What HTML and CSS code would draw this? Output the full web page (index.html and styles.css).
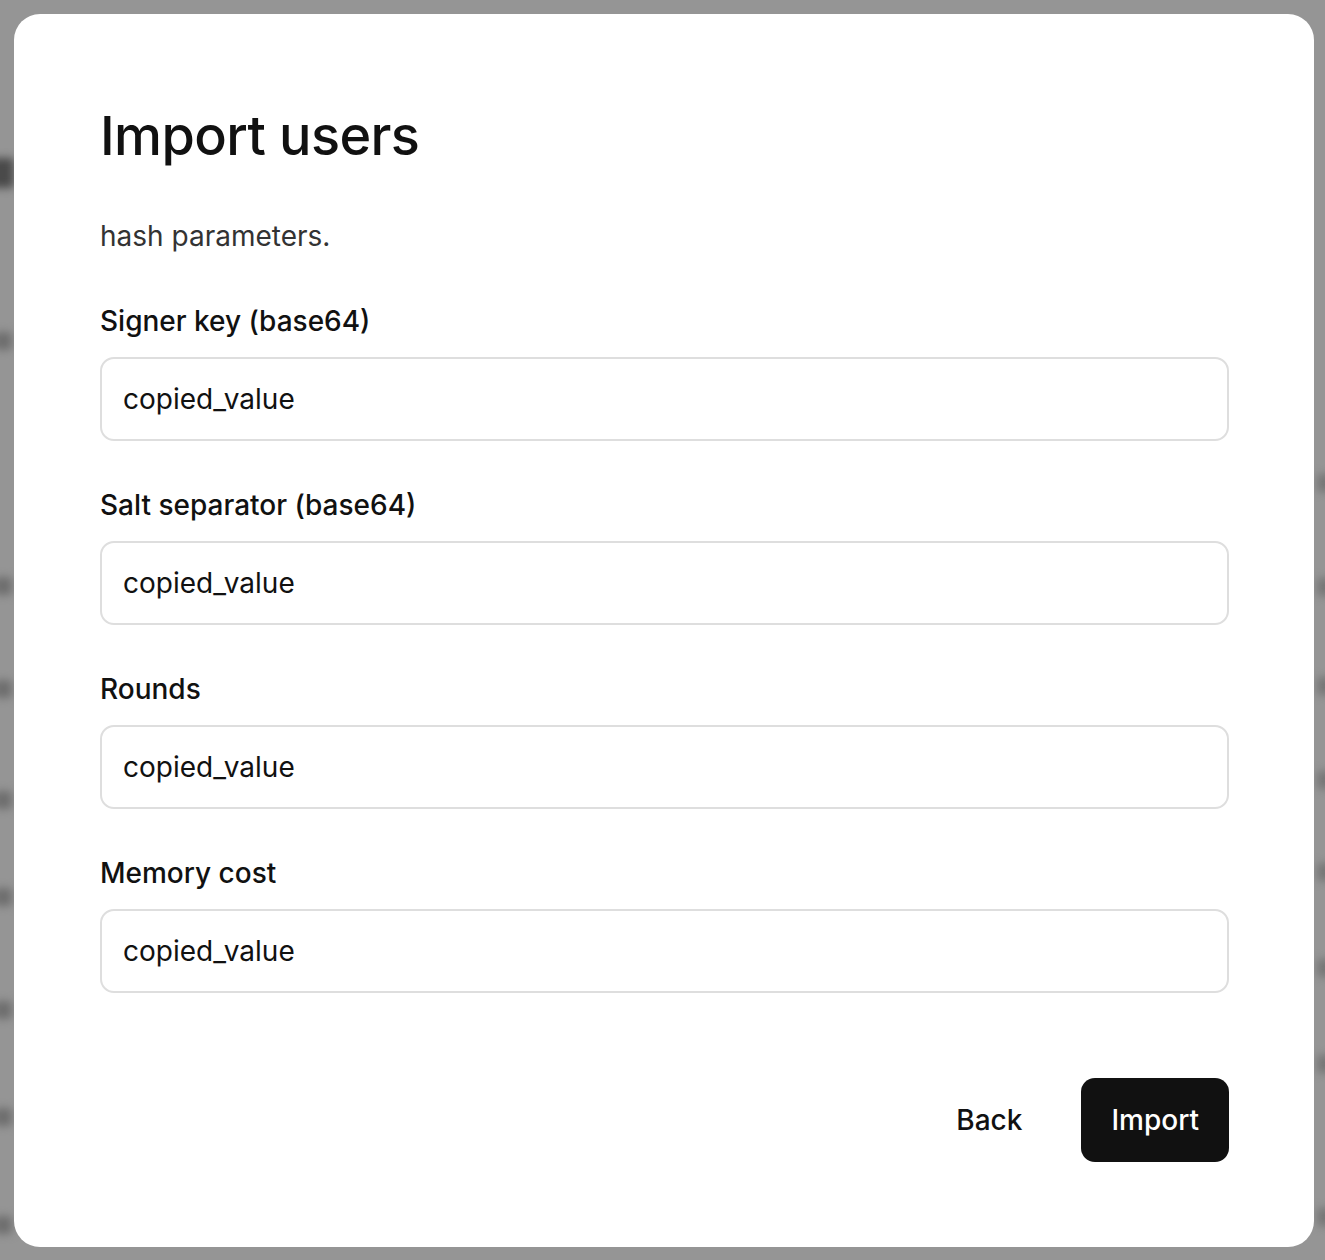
FILE: index.html
```html
<!DOCTYPE html>
<html lang="en">
<head>
    <meta charset="UTF-8">
    <meta name="viewport" content="width=device-width, initial-scale=1.0">
    <title>Import users</title>
    <link rel="stylesheet" href="styles.css">
</head>
<body>
    <!-- blurred page behind the dialog -->
    <div class="backdrop">
        <div class="ghost ghost-big" style="top: 158px"></div>
        <div class="ghost" style="top: 332px"></div>
        <div class="ghost" style="top: 577px"></div>
        <div class="ghost" style="top: 680px"></div>
        <div class="ghost" style="top: 791px"></div>
        <div class="ghost" style="top: 888px"></div>
        <div class="ghost" style="top: 1001px"></div>
        <div class="ghost" style="top: 1108px"></div>
        <div class="ghost" style="top: 1216px"></div>
        <div class="ghost ghost-right" style="top: 474px"></div>
        <div class="ghost ghost-right" style="top: 578px"></div>
        <div class="ghost ghost-right" style="top: 677px"></div>
        <div class="ghost ghost-right" style="top: 771px"></div>
        <div class="ghost ghost-right" style="top: 863px"></div>
        <div class="ghost ghost-right" style="top: 959px"></div>
        <div class="ghost ghost-right" style="top: 1055px"></div>
        <div class="ghost ghost-right" style="top: 1208px"></div>
    </div>

    <div class="modal">
        <h1>Import users</h1>
        <p class="intro">hash parameters.</p>

        <form class="fields">
            <div class="field">
                <label for="signerKey">Signer key (base64)</label>
                <input type="text" id="signerKey" value="copied_value">
            </div>
            <div class="field">
                <label for="saltSeparator">Salt separator (base64)</label>
                <input type="text" id="saltSeparator" value="copied_value">
            </div>
            <div class="field">
                <label for="rounds">Rounds</label>
                <input type="text" id="rounds" value="copied_value">
            </div>
            <div class="field">
                <label for="memoryCost">Memory cost</label>
                <input type="text" id="memoryCost" value="copied_value">
            </div>
        </form>

        <div class="actions">
            <button type="button" class="btn-back">Back</button>
            <button type="button" class="btn-import">Import</button>
        </div>
    </div>
</body>
</html>
```

FILE: styles.css
```css
html, body {
    margin: 0;
    height: 100%;
}
body {
    font-family: Inter, "Noto Sans", sans-serif;
    background-color: #959595;
    color: #111;
    padding: 14px 11px 13px 14px;
    box-sizing: border-box;
    overflow: hidden;
}
.backdrop {
    position: fixed;
    inset: 0;
    z-index: 0;
}
.ghost {
    position: absolute;
    left: -6px;
    width: 18px;
    height: 18px;
    background-color: #6e6e6e;
    filter: blur(4px);
    border-radius: 4px;
}
.ghost-big {
    left: -12px;
    width: 26px;
    height: 30px;
    background-color: #4a4a4a;
}
.ghost-right {
    left: auto;
    right: -8px;
    width: 16px;
    background-color: #767676;
}
.modal {
    position: relative;
    z-index: 1;
    background-color: #fff;
    border-radius: 26px;
    height: 100%;
    box-sizing: border-box;
    padding: 94px 85px 0 86px;
    display: flex;
    flex-direction: column;
}
h1 {
    margin: 0;
    font-size: 54px;
    font-weight: 500;
    letter-spacing: -0.6px;
    line-height: 56px;
    color: #111;
}
.intro {
    margin: 55px 0 0;
    font-size: 28px;
    line-height: 34px;
    color: #333;
}
.fields {
    display: flex;
    flex-direction: column;
    gap: 47px;
    margin-top: 51px;
}
.field label {
    display: block;
    font-size: 28px;
    font-weight: 500;
    line-height: 34px;
    margin-bottom: 19px;
}
.field input {
    display: block;
    width: 100%;
    box-sizing: border-box;
    height: 84px;
    padding: 0 21px;
    border: 2px solid #dedede;
    border-radius: 14px;
    font-family: inherit;
    font-size: 28px;
    color: #111;
    background: #fff;
    outline: none;
}
.actions {
    display: flex;
    justify-content: flex-end;
    align-items: center;
    gap: 27px;
    margin-top: 85px;
}
button {
    font-family: inherit;
    font-size: 28px;
    font-weight: 500;
    height: 84px;
    border: none;
    border-radius: 14px;
    cursor: pointer;
}
.btn-back {
    background: none;
    color: #111;
    padding: 0 32px;
}
.btn-import {
    background-color: #111;
    color: #fff;
    padding: 0 30px;
}
```
